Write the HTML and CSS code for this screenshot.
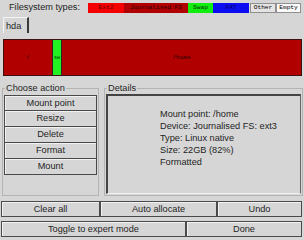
FILE: index.html
```html
<!DOCTYPE html>
<html>
<head>
<meta charset="utf-8">
<link rel="stylesheet" href="styles.css">
</head>
<body>
<div class="top">
  <div class="top-label">Filesystem types:</div>
  <div class="legend">
    <div class="lg ext2">Ext2</div>
    <div class="lg jfs">Journalised FS</div>
    <div class="lg swap">Swap</div>
    <div class="lg fat">FAT</div>
    <div class="lg other">Other</div>
    <div class="lg empty">Empty</div>
  </div>
</div>
<div class="tabs"><div class="tab">hda</div></div>
<div class="panel">
  <div class="bar">
    <div class="seg seg-root">/</div>
    <div class="seg seg-swap">sw</div>
    <div class="seg seg-home">/home</div>
  </div>
</div>
<div class="frames">
  <fieldset class="frame frame-actions">
    <legend>Choose action</legend>
    <div class="action-list">
      <div class="btn">Mount point</div>
      <div class="btn">Resize</div>
      <div class="btn">Delete</div>
      <div class="btn">Format</div>
      <div class="btn">Mount</div>
    </div>
  </fieldset>
  <fieldset class="frame frame-details">
    <legend>Details</legend>
    <div class="details-box">
      <div>Mount point: /home</div>
      <div>Device: Journalised FS: ext3</div>
      <div>Type: Linux native</div>
      <div>Size: 22GB (82%)</div>
      <div>Formatted</div>
    </div>
  </fieldset>
</div>
<div class="row row1">
  <div class="btn b-clear">Clear all</div>
  <div class="btn b-auto">Auto allocate</div>
  <div class="btn b-undo">Undo</div>
</div>
<div class="row row2">
  <div class="btn b-toggle">Toggle to expert mode</div>
  <div class="btn b-done">Done</div>
</div>
</body>
</html>
```
FILE: styles.css
```css
html, body {
  margin: 0;
  padding: 0;
}
body {
  width: 304px;
  height: 240px;
  overflow: hidden;
  background: #d6d6d6;
  font-family: "Liberation Sans", Arial, sans-serif;
  font-size: 9.2px;
  color: #1e1e1e;
}
.top {
  display: flex;
  height: 17px;
}
.top-label {
  width: 88px;
  box-sizing: border-box;
  padding: 2px 0 0 9px;
  line-height: 11px;
}
.legend {
  display: flex;
  margin-top: 3px;
  height: 10px;
  font-family: "Liberation Mono", monospace;
  font-size: 6.2px;
  line-height: 10px;
}
.lg {
  text-align: center;
  box-sizing: border-box;
  white-space: nowrap;
  overflow: hidden;
}
.ext2 { width: 36px; background: #f40000; color: #5a0000; }
.jfs { width: 64px; background: #b00000; color: #2a0000; }
.swap { width: 25px; background: #10ee10; color: #003000; }
.fat { width: 36px; background: #0c0cf0; color: #00005a; }
.other { width: 26px; background: #e4e4e4; color: #000; border: 1px solid #909090; line-height: 8px; margin-left: 1px; }
.empty { width: 25px; background: #fafafa; color: #000; border: 1px solid #909090; line-height: 8px; }
.tabs {
  display: flex;
  height: 16px;
  padding-left: 3px;
}
.tab {
  width: 21px;
  border-top: 1px solid #f4f4f4;
  border-left: 1px solid #f4f4f4;
  border-right: 2px solid #3a3a3a;
  text-align: left;
  padding-left: 2px;
  line-height: 17px;
}
.panel {
  padding: 6px 2px 0 3px;
}
.bar {
  display: flex;
  height: 37px;
  box-sizing: border-box;
  border: 1px solid #3a1010;
  font-family: "Liberation Mono", monospace;
  font-size: 6px;
  color: #1a0000;
}
.seg {
  display: flex;
  align-items: center;
  justify-content: center;
}
.seg-root { width: 48px; background: #b00000; }
.seg-swap {
  width: 8px;
  background: #22f022;
  border-left: 1px solid #302020;
  border-right: 1px solid #302020;
  color: #004000;
  font-size: 5px;
}
.seg-home { flex: 1; background: #b00000; }
.frames {
  display: flex;
  margin-top: 7px;
  height: 113px;
}
.frame {
  margin: 0;
  border: 1px solid #b4b4b4;
  padding: 2px 1px 1px 1px;
  box-sizing: border-box;
  min-width: 0;
}
.frame legend {
  padding: 0 1px;
  margin-left: 1px;
  line-height: 10px;
}
.frame-actions {
  width: 97px;
  margin-left: 2px;
}
.frame-details {
  width: 199px;
  margin-left: 5px;
  padding-top: 1px;
}
.action-list {
  display: flex;
  flex-direction: column;
}
.btn {
  box-sizing: border-box;
  height: 16px;
  line-height: 14px;
  text-align: center;
  border: 1px solid #4a4a4a;
  box-shadow: inset 1px 1px 0 #f2f2f2;
  background: #d6d6d6;
  white-space: nowrap;
}
.action-list .btn + .btn {
  border-top: none;
  height: 16px;
}
.details-box {
  height: 100px;
  box-sizing: border-box;
  border-top: 2px solid #444;
  border-left: 2px solid #444;
  border-right: 1px solid #666;
  border-bottom: 1px solid #f0f0f0;
  padding: 12px 0 0 52px;
  line-height: 12px;
}
.row {
  display: flex;
  padding-left: 1px;
}
.row1 {
  margin-top: 5px;
}
.row2 {
  margin-top: 4px;
}
.b-clear { width: 99px; }
.b-auto { width: 117px; }
.b-undo { width: 85px; }
.b-toggle { width: 185px; }
.b-done { width: 116px; }
```
